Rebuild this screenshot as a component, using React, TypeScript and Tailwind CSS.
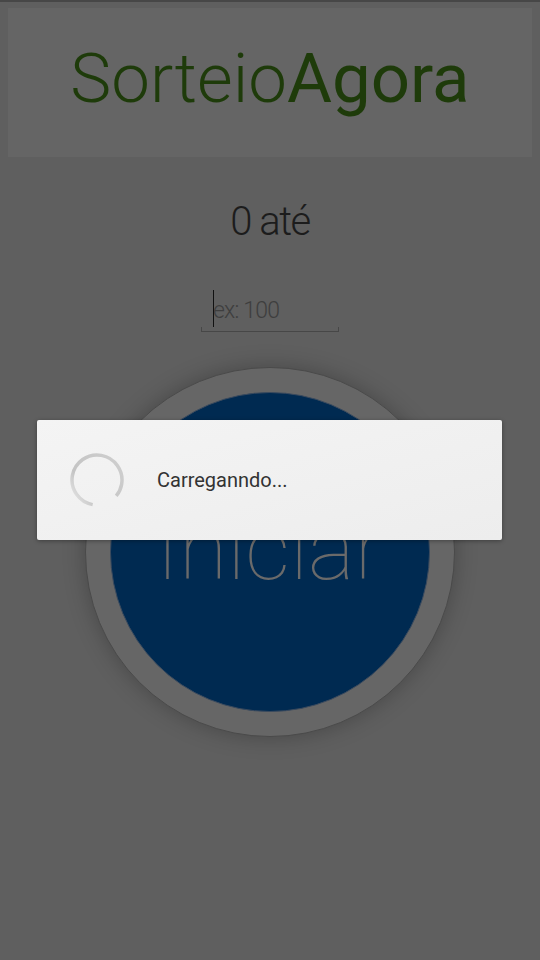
export default function App() {
  return (
    <div className="relative w-[540px] h-[960px] overflow-hidden bg-[#5f5f5f] font-['Roboto',sans-serif]">
      <div className="h-[2px] bg-[#474747]" />
      <div className="flex flex-col items-center">
        <header className="mt-[6px] w-[524px] h-[149px] bg-[#656565] pt-[19px] text-center leading-normal">
          <span className="text-[69px] text-[#1e3b0a]">
            <span className="font-light">Sorteio</span>
            <span className="font-normal">Agora</span>
          </span>
        </header>

        <p className="mt-[35px] text-[40px] font-light leading-normal text-[#1c1c1c] tracking-[-1.5px]">
          0 até
        </p>

        <div className="relative mt-[38px] w-[138px] h-[42px]">
          <span className="absolute left-[12px] top-0 h-[37px] w-px bg-[#111]" />
          <p className="pl-[12px] pt-[4px] text-[23px] font-light leading-normal text-[#3e3e3e] tracking-[-0.8px]">
            ex: 100
          </p>
          <div className="absolute left-0 right-0 bottom-0 h-[5px] border-x border-b border-[#474747]" />
        </div>

        <div className="mt-[35px] w-[370px] h-[370px] rounded-full border border-[#4a4a4a] bg-[#666666] shadow-[0_0_22px_rgba(0,0,0,0.25)] flex items-center justify-center">
          <div className="w-[320px] h-[320px] rounded-full bg-[#002a51] border border-[#3a4a5e] flex items-center justify-center pb-[6px]">
            <span className="text-[88px] font-thin leading-normal text-[#6a6a6a]">Iniciar</span>
          </div>
        </div>
      </div>

      <div className="absolute left-[37px] top-[420px] w-[465px] h-[120px] rounded-[2px] bg-gradient-to-br from-[#f4f4f4] to-[#ededed] shadow-[0_1px_4px_rgba(0,0,0,0.35)] flex items-center pl-[32px]">
        <svg width="56" height="56" viewBox="0 0 56 56">
          <defs>
            <linearGradient id="sp" x1="0" y1="0" x2="1" y2="1">
              <stop offset="0" stopColor="#cfcfcf" />
              <stop offset="0.7" stopColor="#c4c4c4" />
              <stop offset="1" stopColor="#ececec" />
            </linearGradient>
          </defs>
          <circle
            cx="28"
            cy="28"
            r="25"
            fill="none"
            stroke="url(#sp)"
            strokeWidth="3.5"
            strokeDasharray="130 27"
            transform="rotate(100 28 28)"
          />
        </svg>
        <span className="ml-[32px] text-[20px] text-[#333333]">Carreganndo...</span>
      </div>
    </div>
  );
}
